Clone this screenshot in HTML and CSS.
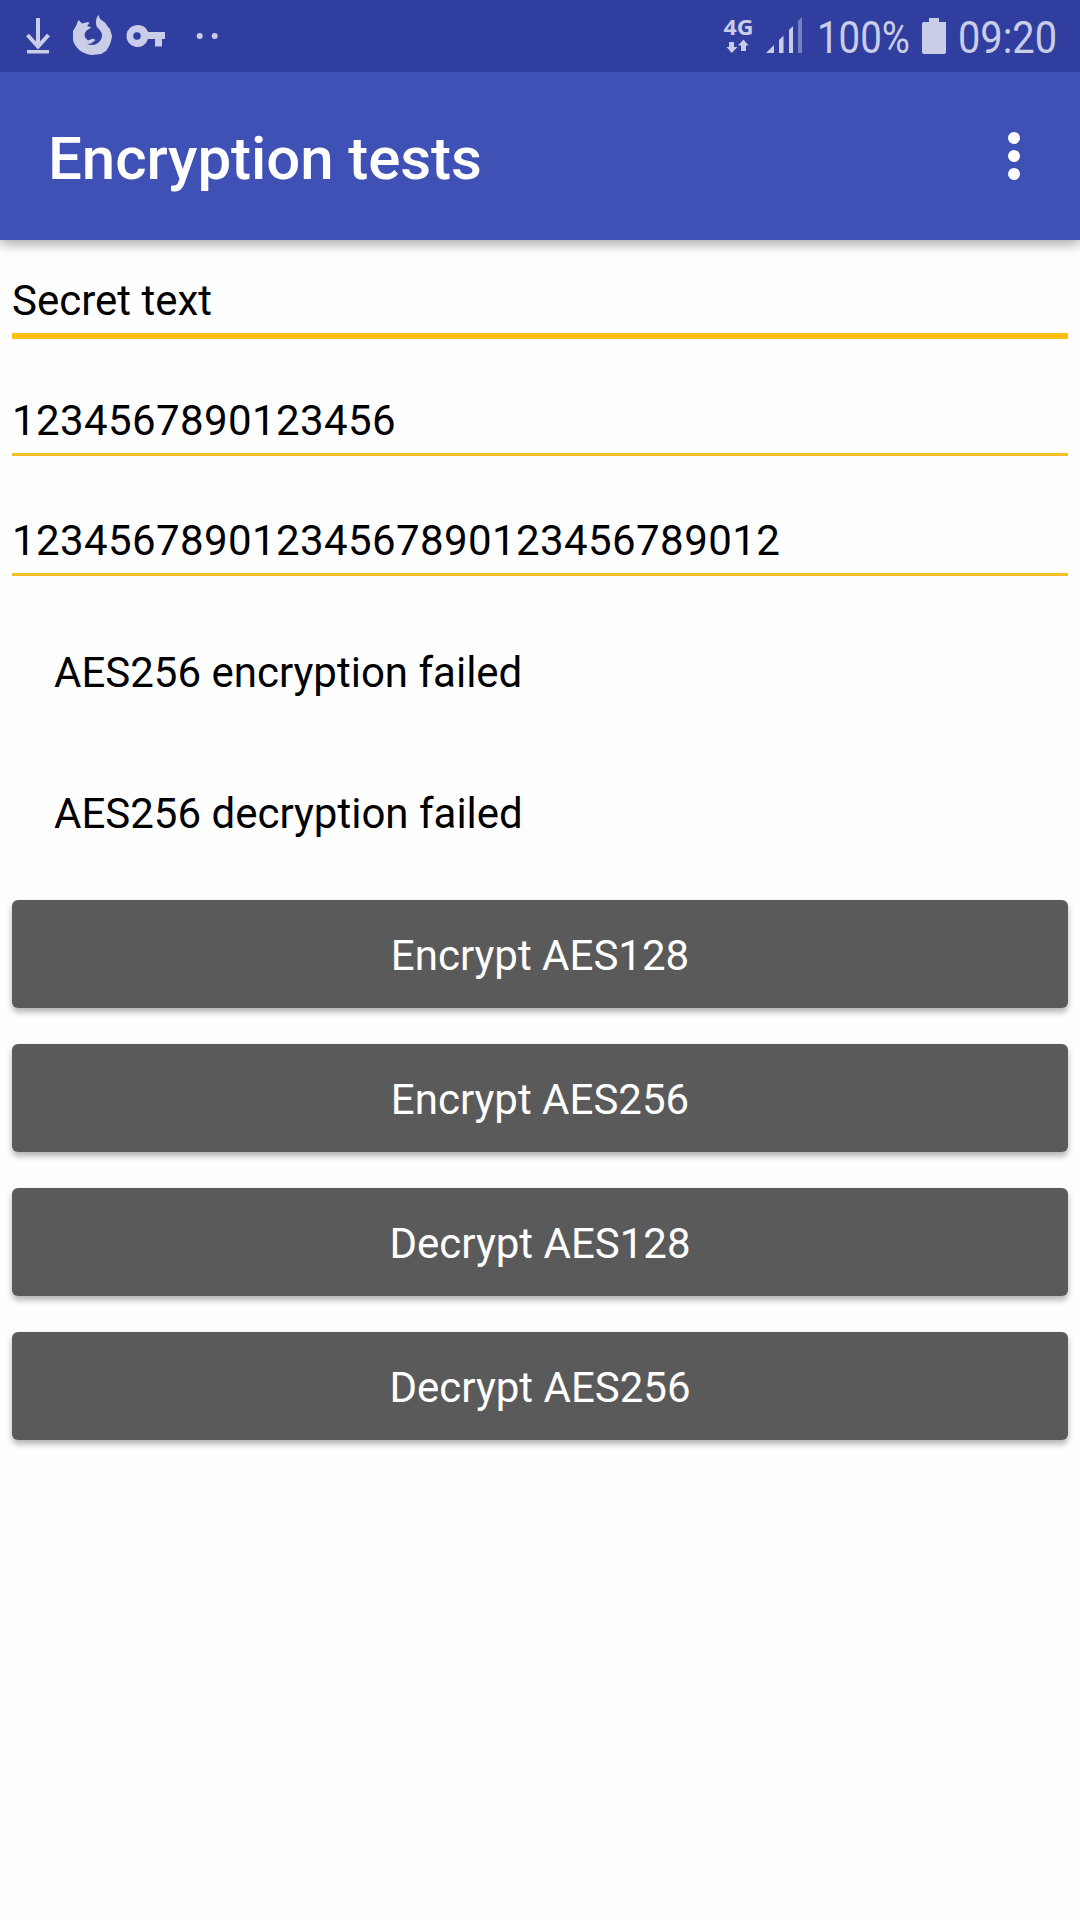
FILE: index.html
```html
<!DOCTYPE html>
<html>
	<head>
		<meta charset="UTF-8">
		<title>Encryption tests</title>
		<link rel="stylesheet" href="styles.css">
	</head>
	<body>
		<div class="status">
			<svg class="notices" width="220" height="72" viewBox="0 0 220 72">
				<!-- download -->
				<path d="M38 18v29M27.500 35L38 46.500L48.500 35" fill="none" stroke="#c9cde8" stroke-width="4"/>
				<path d="M27 50h22v3.500h-22z"/>
				<!-- firefox -->
				<path d="M78.500 20L82 23.500L88 22L89.500 23L87 26L91.500 27.500L86.500 30.500L84.500 34L85 37.500L88 40.500L93 38.500L95.500 40L91 43.500L87 44C95 47 102 42 102 35C102 32 99 29 97 27C95 23 96 18 98.500 15L100 19L105 22.500L108 27L110 29L112 36C111 43 109 47 106 51L101 54L92 55C82 54 75 48 73 40L73 31L76 26Z"/>
				<!-- key -->
				<path fill-rule="evenodd" d="M138 25a11 11 0 0 1 10 7h17v7h-3v7.500h-7v-7.500h-7a11 11 0 1 1-10-14zm-1 7.200a3.800 3.800 0 1 0 0 7.600a3.800 3.800 0 1 0 0-7.600z"/>
				<circle cx="199.700" cy="36" r="3"/>
				<circle cx="214.700" cy="36" r="3"/>
			</svg>
			<svg class="system" width="360" height="72" viewBox="720 0 360 72">
				<text class="net" x="723.500" y="35" textLength="30" lengthAdjust="spacingAndGlyphs">4G</text>
				<path d="M729 42h5v5h3.500l-5.700 6l-5.300-6h2.500zM743.500 39.500l5.200 6h-2.700v5.500h-5v-5.500h-3z"/>
				<!-- signal -->
				<path d="M766 53l8-8v8zM779 40l4.500-4.500v17.500h-4.500zM789 30l4-4v27h-4z"/>
				<path class="dim" d="M798 21l4-4v36h-4z"/>
				<text x="817" y="53" textLength="93" lengthAdjust="spacingAndGlyphs">100%</text>
				<path d="M929 18h10v4h7v30q0 2-2 2h-20q-2 0-2-2v-28q0-2 2-2h5z"/>
				<text x="958" y="53" textLength="99" lengthAdjust="spacingAndGlyphs">09:20</text>
			</svg>
		</div>
		<div class="bar">
			<h1>Encryption tests</h1>
			<div class="more"><i></i><i></i><i></i></div>
		</div>
		<div class="main">
			<div class="field active">Secret text</div>
			<div class="field num">1234567890123456</div>
			<div class="field num">12345678901234567890123456789012</div>
			<p>AES256 encryption failed</p>
			<p>AES256 decryption failed</p>
			<div class="btns">
				<button>Encrypt AES128</button>
				<button>Encrypt AES256</button>
				<button>Decrypt AES128</button>
				<button>Decrypt AES256</button>
			</div>
		</div>
	</body>
</html>
```

FILE: styles.css
```css
*{margin: 0;padding: 0;box-sizing: border-box;}
body{width: 1080px;height: 1920px;background: #fefefe;color: #000;font-family: Roboto, "Noto Sans", sans-serif;font-size: 42px;overflow: hidden;}
.status{height: 72px;background: #303f9f;display: flex;justify-content: space-between;position: relative;z-index: 1;}
.status svg{display: block;fill: #c9cde8;}
.status text{font-size: 45px;}
.status .net{font-family: "Noto Sans", sans-serif;font-size: 22px;font-weight: 700;}
.status .dim{fill: #7680c0;}

.bar{height: 168px;background: #3f51b5;display: flex;justify-content: space-between;align-items: center;padding: 0 60px 0 48px;box-shadow: 0 4px 12px rgba(0,0,0,.35);}
.bar h1{font-size: 60px;font-weight: 500;line-height: 72px;letter-spacing: -.07px;color: #fff;padding-top: 6px;}
.more{display: flex;flex-direction: column;gap: 6px;}
.more i{width: 12px;height: 12px;border-radius: 50%;background: #fff;}

.main{padding: 0 12px;}
.field{height: 120px;line-height: 50px;padding-top: 60px;border-bottom: 3px solid #f1c024;white-space: nowrap;}
.field.active{height: 99px;padding-top: 36px;border-bottom: 6px solid #fcc010;}
.field.active + .field{height: 117px;padding-top: 57px;}
.num{letter-spacing: .4px;}
.main p{height: 141px;line-height: 50px;padding: 72px 0 0 42px;}

.btns{display: flex;flex-direction: column;gap: 36px;padding-top: 42px;}
.btns button{height: 108px;border: 0;border-radius: 6px;background: #5a5a5b;color: #fff;font: 42px/50px Roboto, sans-serif;padding-top: 4px;box-shadow: 0 4px 6px rgba(0,0,0,.3);}
```
